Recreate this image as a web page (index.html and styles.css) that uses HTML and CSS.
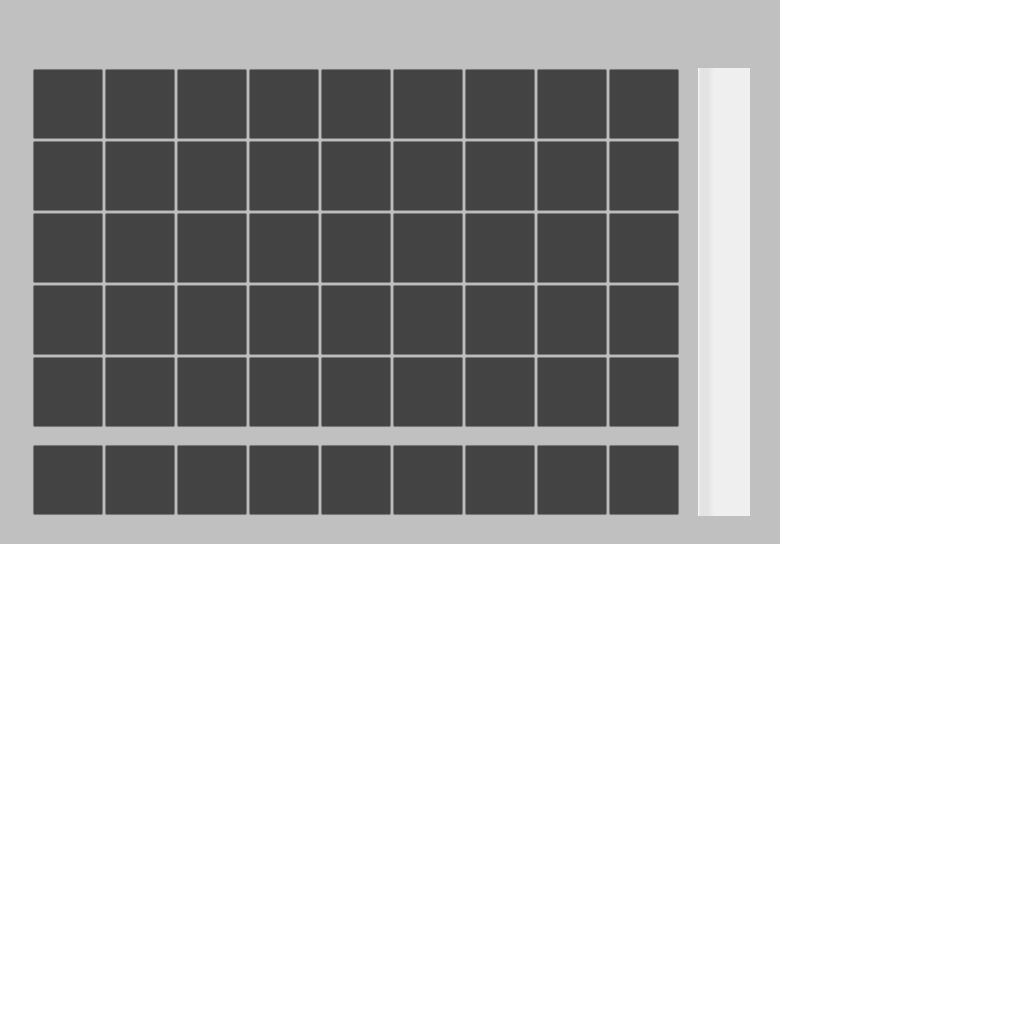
FILE: index.html
```html
<!DOCTYPE html>
<html lang="en">
  <head>
    <meta charset="UTF-8" />
    <meta name="viewport" content="width=device-width, initial-scale=1.0" />
    <title>Inventory</title>
    <link rel="stylesheet" href="styles.css">
  </head>
  <body>
    <div class="panel">
      <div class="slots">
        <div id="storage" class="grid"></div>
        <div id="hotbar" class="grid hotbar"></div>
      </div>
      <div class="scrollbar"></div>
    </div>

    <script>
      function fill(id, count) {
        const box = document.getElementById(id);
        for (let i = 0; i < count; i++) {
          const slot = document.createElement("div");
          slot.className = "slot";
          box.appendChild(slot);
        }
      }
      fill("storage", 45);
      fill("hotbar", 9);
    </script>
  </body>
</html>
```

FILE: styles.css
```css
body {
  margin: 0;
  font-family: "Liberation Sans", Arial, sans-serif;
  background: #fff;
}
.panel {
  display: flex;
  align-items: flex-start;
  width: 780px;
  height: 544px;
  box-sizing: border-box;
  padding: 68px 30px 28px 33px;
  background: #c0c0c0;
}
.slots {
  padding-top: 1px;
}
.grid {
  display: grid;
  grid-template-columns: repeat(9, 70px);
  gap: 2px;
}
.hotbar {
  margin-top: 18px;
}
.slot {
  width: 70px;
  height: 70px;
  box-sizing: border-box;
  background: #434343;
  border: 1px solid #7a7a7a;
  border-radius: 2px;
  box-shadow: 0 0 1px #9a9a9a;
}
.scrollbar {
  margin-left: 19px;
  width: 52px;
  height: 448px;
  background: linear-gradient(to right, #f4f4f4 0, #f4f4f4 1px, #e3e3e3 2px, #e3e3e3 10px, #efefef 16px);
}
```
